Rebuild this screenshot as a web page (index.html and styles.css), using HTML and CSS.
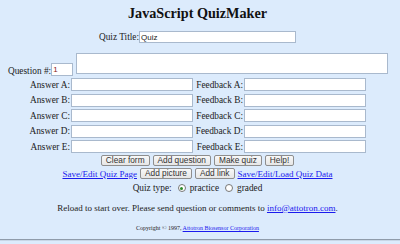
FILE: index.html
```html
<!DOCTYPE html>
<html lang="en">
<head>
    <meta charset="UTF-8">
    <title>JavaScript QuizMaker</title>
    <link rel="stylesheet" href="styles.css">
</head>
<body>
    <div class="page">
        <h1 class="title">JavaScript QuizMaker</h1>

        <div class="quiz-title-row">
            <label class="label">Quiz Title:</label>
            <input class="field title-field" type="text" value="Quiz">
        </div>

        <div class="question-row">
            <label class="label">Question #:</label>
            <input class="field num-field" type="text" value="1">
            <textarea class="field question-field"></textarea>
        </div>

        <div class="answers">
            <label class="label">Answer A:</label>
            <input class="field answer-field" type="text">
            <label class="label">Feedback A:</label>
            <input class="field answer-field" type="text">

            <label class="label">Answer B:</label>
            <input class="field answer-field" type="text">
            <label class="label">Feedback B:</label>
            <input class="field answer-field" type="text">

            <label class="label">Answer C:</label>
            <input class="field answer-field" type="text">
            <label class="label">Feedback C:</label>
            <input class="field answer-field" type="text">

            <label class="label">Answer D:</label>
            <input class="field answer-field" type="text">
            <label class="label">Feedback D:</label>
            <input class="field answer-field" type="text">

            <label class="label">Answer E:</label>
            <input class="field answer-field" type="text">
            <label class="label">Feedback E:</label>
            <input class="field answer-field" type="text">
        </div>

        <div class="button-row">
            <button class="btn">Clear form</button>
            <button class="btn">Add question</button>
            <button class="btn">Make quiz</button>
            <button class="btn">Help!</button>
        </div>

        <div class="button-row">
            <a class="link" href="#">Save/Edit Quiz Page</a>
            <button class="btn">Add picture</button>
            <button class="btn">Add link</button>
            <a class="link" href="#">Save/Edit/Load Quiz Data</a>
        </div>

        <div class="type-row">
            <span class="label">Quiz type:</span>
            <span class="radio checked"></span>
            <span class="label">practice</span>
            <span class="radio"></span>
            <span class="label">graded</span>
        </div>

        <p class="note">Reload to start over. Please send question or comments to <a class="link" href="#">info@attotron.com</a>.</p>

        <p class="copyright">Copyright &copy; 1997, <a class="link" href="#">Attotron Biosensor Corporation</a></p>

        <div class="rule"></div>
    </div>
</body>
</html>
```

FILE: styles.css
```css
* {
    margin: 0;
    padding: 0;
    box-sizing: border-box;
}

html {
    background-color: #dcebfc;
}

body {
    font-family: "Liberation Serif", "Times New Roman", serif;
    color: #222;
}

.page {
    width: 400px;
    padding-right: 5px;
}

.title {
    font-size: 14.2px;
    font-weight: bold;
    text-align: center;
    color: #111;
    line-height: 18px;
    padding-top: 4px;
}

.label {
    font-size: 9.3px;
    line-height: 12px;
    white-space: nowrap;
}

.field {
    background: white;
    border: 1px solid #a9b9cd;
    font-family: "Liberation Sans", Arial, sans-serif;
    font-size: 8px;
    color: #222;
    padding: 0 1px;
    outline: none;
}

.quiz-title-row {
    display: flex;
    justify-content: center;
    align-items: center;
    margin-top: 9px;
}

.title-field {
    width: 157px;
    height: 12px;
}

.question-row {
    display: flex;
    align-items: flex-end;
    padding-left: 8px;
    margin-top: 10px;
}

.question-row .label {
    line-height: 10px;
}

.num-field {
    width: 22px;
    height: 13px;
    color: #8b1a1a;
}

.question-field {
    width: 312px;
    height: 21px;
    margin-left: 3px;
    margin-bottom: 2px;
    resize: none;
}

.answers {
    display: grid;
    grid-template-columns: 71px 122px 51px 122px;
    row-gap: 2.5px;
    align-items: center;
    margin-top: 2px;
}

.answers .label {
    text-align: right;
    padding-right: 1px;
}

.answer-field {
    height: 13px;
}

.button-row {
    display: flex;
    justify-content: center;
    align-items: center;
    gap: 3px;
    margin-top: 2px;
}

.btn {
    font-family: "Liberation Sans", Arial, sans-serif;
    font-size: 8.3px;
    color: #333;
    background: linear-gradient(#f8f8f8, #e6e6e6);
    border: 1px solid #8e8e8e;
    border-radius: 2px;
    height: 11px;
    padding: 0 4px;
    line-height: 9px;
}

.link {
    color: #1a1aee;
    font-size: 9px;
    text-decoration: underline;
}

.type-row {
    display: flex;
    justify-content: center;
    align-items: center;
    gap: 4px;
    margin-top: 3px;
}

.radio {
    width: 8px;
    height: 8px;
    border: 1px solid #777;
    border-radius: 50%;
    background: white;
    display: flex;
    align-items: center;
    justify-content: center;
    margin-left: 2px;
}

.radio.checked::after {
    content: "";
    width: 3px;
    height: 3px;
    border-radius: 50%;
    background: #2a8a2a;
}

.note {
    text-align: center;
    font-size: 9px;
    line-height: 12px;
    margin-top: 8px;
}

.note .link {
    font-size: 9px;
}

.copyright {
    text-align: center;
    font-size: 6px;
    line-height: 8px;
    margin-top: 10px;
}

.copyright .link {
    font-size: 6px;
}

.rule {
    width: 400px;
    height: 2px;
    background: #8f9baa;
    border-bottom: 1px solid #c8d6e6;
    margin-top: 7px;
}
```
